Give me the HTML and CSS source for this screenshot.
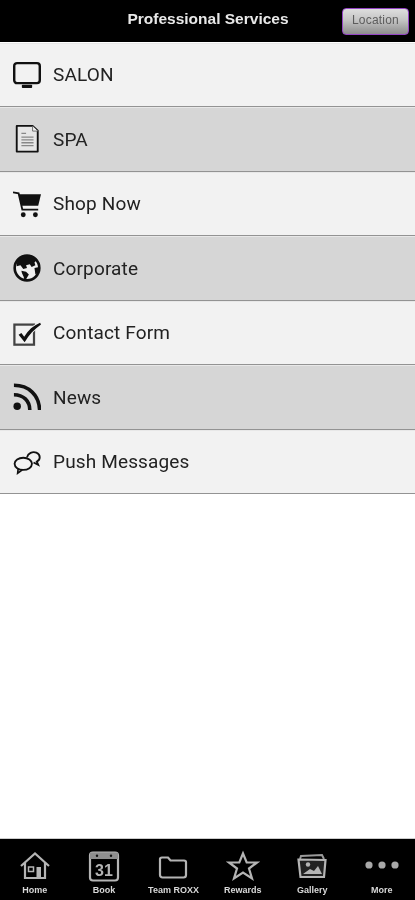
FILE: index.html
```html
<!DOCTYPE html>
<html lang="en">
<head>
<meta charset="utf-8">
<title>Professional Services</title>
<link rel="stylesheet" href="styles.css">
</head>
<body>
<div class="app">
  <header class="topbar">
    <h1 class="title">Professional Services</h1>
    <button class="loc-btn">Location</button>
  </header>
  <main class="list">
    <a class="row">
      <svg class="row-icon" viewBox="0 0 30 30"><rect x="1.300" y="2.300" width="27.400" height="21.400" rx="3" fill="none" stroke="#111" stroke-width="2.600"/><rect x="9.500" y="25.500" width="11" height="3.500" rx=".8" fill="#111"/></svg>
      <span>SALON</span>
    </a>
    <a class="row alt">
      <svg class="row-icon" viewBox="0 0 30 30"><path d="M4 1H21L26.500 6V28.500H4Z" fill="#e6e6e6" stroke="#111" stroke-width="2" stroke-linejoin="round"/><path d="M21 1V6.500H26.500" fill="#f4f4f4" stroke="#666" stroke-width="1"/><path d="M9 9h5M9 13h13M9 16h13M9 19h13M9 22h13" stroke="#888" stroke-width="1.400"/></svg>
      <span>SPA</span>
    </a>
    <a class="row">
      <svg class="row-icon" viewBox="0 0 30 30"><path d="M0 2.500L6 3.500 10 21H27" fill="none" stroke="#111" stroke-width="2"/><path d="M6 4.500H30L27 17H9Z" fill="#111"/><circle cx="11" cy="26.500" r="2.600" fill="#111"/><circle cx="24" cy="26.500" r="2.600" fill="#111"/></svg>
      <span>Shop Now</span>
    </a>
    <a class="row alt">
      <svg class="row-icon" viewBox="0 0 30 30"><circle cx="15" cy="15" r="13.200" fill="#f0f0f0" stroke="#111" stroke-width="2.800"/><path d="M9 3C14 0 22 1 26 6L23 9 24 12 20 14 18 11 14 12 15 15 11 16 8 12 4 13C4 9 5 5 9 3ZM9 18L14 19 17 22 14 27 12 27C12 24 9 21 9 18ZM23 15L28 14 27 20 24 22Z" fill="#111"/></svg>
      <span>Corporate</span>
    </a>
    <a class="row">
      <svg class="row-icon" viewBox="0 0 30 30"><rect x="1.500" y="6" width="21" height="21.500" fill="none" stroke="#444" stroke-width="2.400"/><path class="check" d="M6 17L9 15 12 19C16 12 22 7 29 4L30 6C23 11 17 17 12.500 25Z"/></svg>
      <span>Contact Form</span>
    </a>
    <a class="row alt">
      <svg class="row-icon" viewBox="0 0 30 30"><circle cx="4.500" cy="25" r="4" fill="#111"/><path d="M1 12.500C11 12.500 18 19 18 29" fill="none" stroke="#111" stroke-width="3.800"/><path d="M1 2.500C17 2.500 28 13 28.500 29" fill="none" stroke="#111" stroke-width="3.800"/></svg>
      <span>News</span>
    </a>
    <a class="row">
      <svg class="row-icon" viewBox="0 0 30 30"><ellipse cx="11" cy="17" rx="9.300" ry="6.500" fill="none" stroke="#111" stroke-width="2"/><path d="M5.500 22.500L5 27 10 23.500" fill="none" stroke="#111" stroke-width="1.800"/><path d="M15 10C16 5.500 21 3.500 25 5 30 7 29.500 13 25.500 14.500L27 18 22 15.500" fill="none" stroke="#111" stroke-width="2"/></svg>
      <span>Push Messages</span>
    </a>
  </main>
  <nav class="tabbar">
    <a class="tab">
      <svg class="tab-icon" viewBox="0 0 30 30"><path d="M1 15L15 2.500 29 15M5 12V27H25V12" fill="none" stroke="#b4b4b4" stroke-width="2.200"/><rect x="8.500" y="16" width="5" height="4.500" fill="none" stroke="#b4b4b4" stroke-width="1.500"/><rect x="16.500" y="16" width="4.500" height="11" fill="#b4b4b4"/></svg>
      <span>Home</span>
    </a>
    <a class="tab">
      <svg class="tab-icon" viewBox="0 0 30 30"><rect x="1" y="1.500" width="28" height="28" rx="3" fill="none" stroke="#b4b4b4" stroke-width="2.200"/><rect x="1" y="1.500" width="28" height="6.500" fill="#8e8e8e"/><circle cx="8" cy="4.700" r="1.200" fill="#111"/><circle cx="22" cy="4.700" r="1.200" fill="#111"/><text x="15" y="24.500" class="cal-num">31</text></svg>
      <span>Book</span>
    </a>
    <a class="tab">
      <svg class="tab-icon" viewBox="0 0 30 30"><path d="M2 24V8C2 7 3 6.500 4 6.500H10L12.500 9.500H26C27 9.500 28 10 28 11V24C28 25.500 27 26.500 25.500 26.500H4.500C3 26.500 2 25.500 2 24Z" fill="none" stroke="#b4b4b4" stroke-width="2.200"/></svg>
      <span>Team ROXX</span>
    </a>
    <a class="tab">
      <svg class="tab-icon" viewBox="0 0 30 30"><path d="M15 2.500L18.700 11.500H29L21 17.500 24 27.500 15 21.500 6 27.500 9 17.500 1 11.500H11.300Z" fill="none" stroke="#b4b4b4" stroke-width="2.200"/></svg>
      <span>Rewards</span>
    </a>
    <a class="tab">
      <svg class="tab-icon" viewBox="0 0 30 30"><path d="M3 8L4 5 25 4 27 8" fill="none" stroke="#9a9a9a" stroke-width="2"/><path d="M1.500 8.500L28.500 9 27 26 3.500 26Z" fill="#222" stroke="#b4b4b4" stroke-width="2.200"/><circle cx="11" cy="13.500" r="2.200" fill="#b4b4b4"/><path d="M6 23L13 18 17 20 21 15 25 23Z" fill="#b4b4b4"/></svg>
      <span>Gallery</span>
    </a>
    <a class="tab">
      <svg class="tab-icon" viewBox="0 0 30 30"><circle cx="2" cy="14" r="3.600" fill="#a8a8a8"/><circle cx="15" cy="14" r="3.600" fill="#a8a8a8"/><circle cx="28" cy="14" r="3.600" fill="#a8a8a8"/></svg>
      <span>More</span>
    </a>
  </nav>
</div>
</body>
</html>
```

FILE: styles.css
```css
* { box-sizing: border-box; }
html, body { margin: 0; padding: 0; }
body { font-family: "Roboto", "Liberation Sans", sans-serif; background: #fff; }
.app { width: 415px; height: 900px; display: flex; flex-direction: column; overflow: hidden; }

.topbar { height: 42px; flex: none; background: #000; display: flex; align-items: center; justify-content: center; padding-bottom: 4px; position: relative; }
.title { margin: 0 0 0 1px; font: bold 15.5px "Liberation Sans", sans-serif; color: #e8e8e8; filter: blur(.4px); }
.loc-btn { position: absolute; left: 342px; top: 8px; width: 67px; height: 27px; padding: 0 0 3px; border: 1.5px solid #9444c4; border-radius: 4px; background: linear-gradient(#dedede, #c4c4c4 45%, #8c8c8c); font: 12px "Liberation Sans", sans-serif; letter-spacing: .2px; color: #5c5c5c; filter: blur(.5px); }

.list { flex: 1; display: flex; flex-direction: column; padding-top: .5px; }
.row { height: 64.5px; flex: none; display: flex; align-items: center; gap: 12px; padding-left: 13px; background: #f2f2f2; border-top: 1px solid #e8e8e8; border-bottom: 1.5px solid #939393; color: #222; font-size: 19px; letter-spacing: .15px; }
.row.alt { background: #d6d6d6; }
.row span { filter: blur(.4px); }
.row-icon { width: 28px; height: 28px; flex: none; filter: blur(.35px); }
.check { fill: #111; stroke: #f2f2f2; stroke-width: 1.500; paint-order: stroke; }

.tabbar { height: 62px; flex: none; background: #000; display: grid; grid-template-columns: repeat(6, 69.4px); overflow: hidden; border-top: 1px solid #ccc; }
.tab { display: flex; flex-direction: column; align-items: center; gap: 4px; padding-top: 12px; color: #d8d8d8; font: bold 9px "Liberation Sans", sans-serif; }
.tab span { filter: blur(.5px); white-space: nowrap; }
.tab-icon { width: 30px; height: 30px; flex: none; overflow: visible; filter: blur(.6px); }
.cal-num { font: bold 16px "Liberation Sans", sans-serif; fill: #b4b4b4; text-anchor: middle; }
```
